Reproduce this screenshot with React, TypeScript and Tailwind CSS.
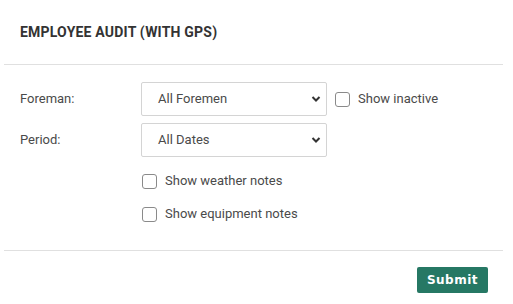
import React from "react";

function Chevron() {
  return (
    <svg width="10" height="7" viewBox="0 0 10 7" className="absolute right-[5px] top-1/2 -translate-y-1/2 pointer-events-none">
      <path d="M1.5 1.5 L5 5 L8.5 1.5" fill="none" stroke="#333" strokeWidth="2" />
    </svg>
  );
}

function Select({ value }: { value: string }) {
  return (
    <div className="relative w-[186px] h-[34px] border border-[#d4d4d4] rounded-[2px] bg-white flex items-center pl-[16px] text-[13px] text-[#4a4a4a]">
      <span>{value}</span>
      <Chevron />
    </div>
  );
}

function Checkbox({ label }: { label: string }) {
  return (
    <label className="flex items-center gap-[8px] text-[13px] text-[#4a4a4a] h-[20px]">
      <span className="w-[15px] h-[15px] border border-[#8a8a8a] rounded-[3px] bg-white" />
      <span>{label}</span>
    </label>
  );
}

export default function App() {
  return (
    <div className="w-[513px] h-[304px] bg-white" style={{ fontFamily: "Roboto, 'Liberation Sans', sans-serif" }}>
      <div className="h-[64px] flex items-center pl-[20px]">
        <h1 className="text-[14px] font-bold text-[#333] tracking-[0.2px]">EMPLOYEE AUDIT (WITH GPS)</h1>
      </div>
      <div className="ml-[4px] mr-[10px] h-px bg-[#e0e0e0]" />
      <div className="pl-[20px] pt-[17px] flex flex-col">
        <div className="flex items-center h-[34px]">
          <div className="w-[121px] text-[13px] text-[#4a4a4a]">Foreman:</div>
          <Select value="All Foremen" />
          <div className="ml-[8px]">
            <Checkbox label="Show inactive" />
          </div>
        </div>
        <div className="flex items-center h-[34px] mt-[7px]">
          <div className="w-[121px] text-[13px] text-[#4a4a4a]">Period:</div>
          <Select value="All Dates" />
        </div>
        <div className="pl-[122px] mt-[14px] flex flex-col gap-[13px]">
          <Checkbox label="Show weather notes" />
          <Checkbox label="Show equipment notes" />
        </div>
      </div>
      <div className="ml-[4px] mr-[10px] h-px bg-[#e0e0e0] mt-[26px]" />
      <div className="flex justify-end pr-[25px] pt-[16px]">
        <button
          className="h-[26px] w-[71px] bg-[#267864] text-white text-[12px] font-bold rounded-[2px] tracking-[0.5px]"
          style={{ fontFamily: "'DejaVu Sans', sans-serif" }}
        >
          Submit
        </button>
      </div>
    </div>
  );
}
